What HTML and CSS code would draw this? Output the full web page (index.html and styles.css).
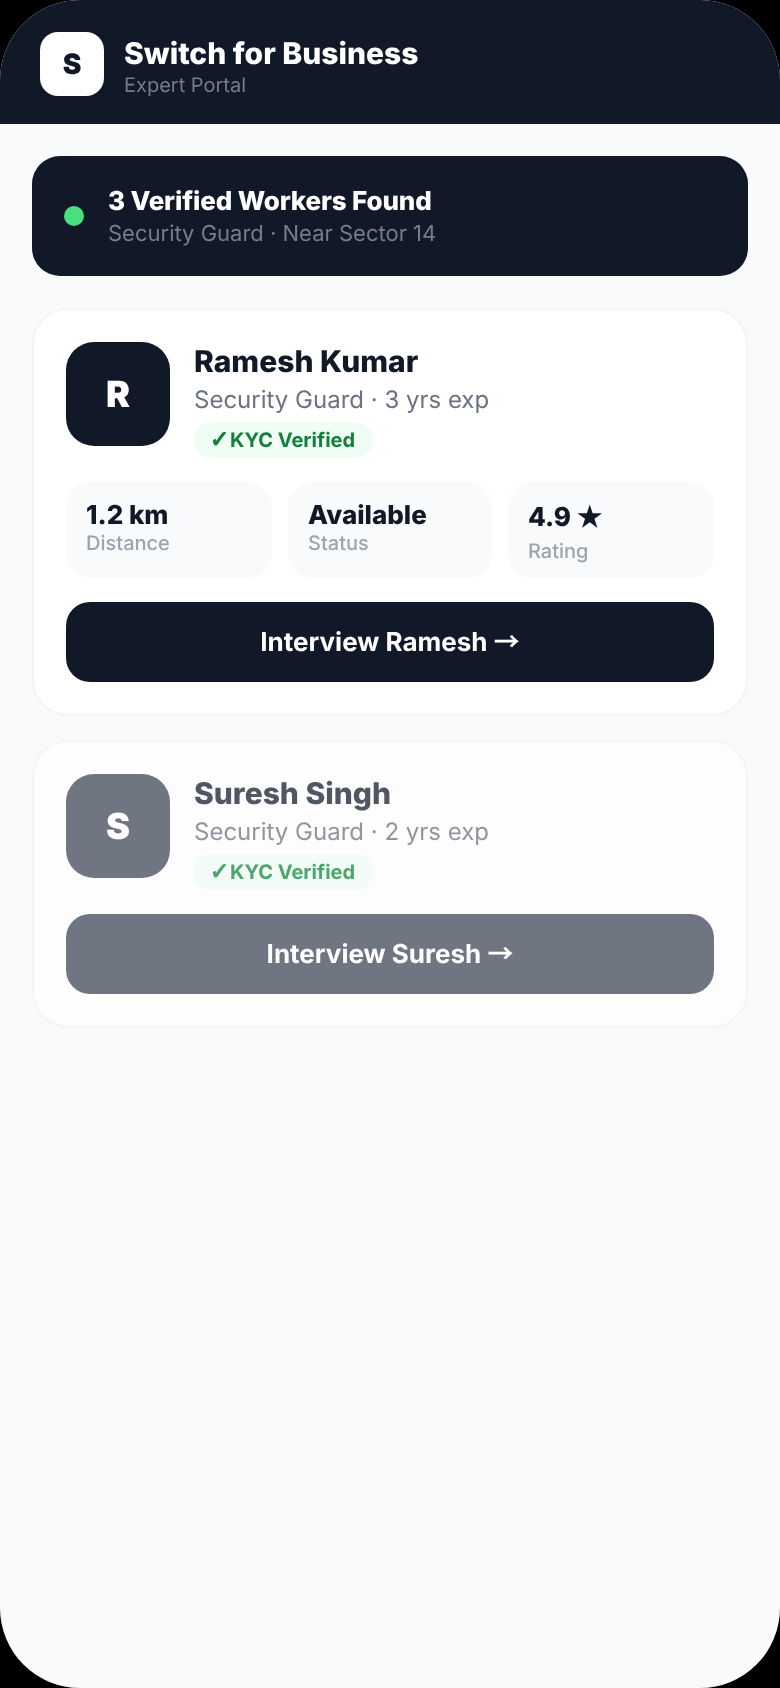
FILE: index.html
```html
<!DOCTYPE html>
<html lang="en">
<head>
<meta charset="utf-8">
<title>Switch for Business</title>
<link rel="stylesheet" href="styles.css">
</head>
<body>
<div class="app">
  <header class="header">
    <div class="logo">S</div>
    <div class="brand-text">
      <div class="brand">Switch for Business</div>
      <div class="portal">Expert Portal</div>
    </div>
  </header>
  <main class="content">
    <section class="banner">
      <span class="dot"></span>
      <div class="banner-text">
        <div class="banner-title">3 Verified Workers Found</div>
        <div class="banner-sub">Security Guard · Near Sector 14</div>
      </div>
    </section>
    <article class="card">
      <div class="person">
        <div class="avatar">R</div>
        <div class="info">
          <div class="name">Ramesh Kumar</div>
          <div class="role">Security Guard · 3 yrs exp</div>
          <span class="badge"><span class="check">✓</span>KYC Verified</span>
        </div>
      </div>
      <div class="stats">
        <div class="stat"><div class="value">1.2 km</div><div class="label">Distance</div></div>
        <div class="stat"><div class="value">Available</div><div class="label">Status</div></div>
        <div class="stat"><div class="value value-rated">4.9 <span class="glyph">★</span></div><div class="label">Rating</div></div>
      </div>
      <button class="cta">Interview Ramesh <span class="glyph">→</span></button>
    </article>
    <article class="card card-muted">
      <div class="person">
        <div class="avatar">S</div>
        <div class="info">
          <div class="name">Suresh Singh</div>
          <div class="role">Security Guard · 2 yrs exp</div>
          <span class="badge"><span class="check">✓</span>KYC Verified</span>
        </div>
      </div>
      <button class="cta">Interview Suresh <span class="glyph">→</span></button>
    </article>
  </main>
</div>
</body>
</html>
```
FILE: styles.css
```css
* { box-sizing: border-box; }
html, body { margin: 0; background: #000; }
body {
  font-family: Inter, "Liberation Sans", sans-serif;
  font-optical-sizing: none;
  text-rendering: geometricPrecision;
}
.glyph { font-family: "Noto Sans CJK JP", "DejaVu Sans", sans-serif; line-height: 1; }
.check {
  display: inline-block;
  width: 20px;
  font-family: "DejaVu Sans", sans-serif;
  font-size: 23px;
  line-height: 1;
  -webkit-text-stroke: 1.2px currentColor;
}
.app {
  width: 780px;
  height: 1688px;
  border-radius: 80px;
  overflow: hidden;
  background: #f9fafb;
  transform: translateZ(0);
}
.header {
  height: 124px;
  background: #111827;
  display: flex;
  align-items: flex-start;
  gap: 20px;
  padding: 32px 40px 0;
}
.logo {
  width: 64px;
  height: 64px;
  border-radius: 18px;
  background: #fff;
  color: #111827;
  font-size: 28px;
  font-weight: 900;
  display: flex;
  align-items: center;
  justify-content: center;
}
.brand-text { padding-top: 4px; }
.brand { color: #fff; font-size: 30px; font-weight: 850; line-height: 36px; }
.portal { color: #767c88; font-size: 20px; line-height: 26px; }
.content {
  padding: 32px;
  display: flex;
  flex-direction: column;
  gap: 24px;
}
.banner {
  height: 120px;
  margin-bottom: 8px;
  background: #111827;
  border-radius: 28px;
  display: flex;
  align-items: center;
  gap: 24px;
  padding: 0 32px;
}
.dot { width: 20px; height: 20px; border-radius: 50%; background: #4ade80; }
.banner-text { padding-top: 5px; }
.banner-title { color: #fff; font-size: 26px; font-weight: 800; line-height: 32px; letter-spacing: -0.15px; }
.banner-sub { color: #767c88; font-size: 22px; line-height: 33px; }
.card {
  background: #fff;
  border: 2px solid #f3f4f6;
  border-radius: 36px;
  padding: 32px;
  display: flex;
  flex-direction: column;
  gap: 24px;
}
.person { display: flex; gap: 24px; align-items: flex-start; }
.avatar {
  flex: none;
  width: 104px;
  height: 104px;
  border-radius: 28px;
  background: #111827;
  color: #fff;
  font-size: 36px;
  font-weight: 900;
  display: flex;
  align-items: center;
  justify-content: center;
}
.info { display: flex; flex-direction: column; align-items: flex-start; }
.name { color: #111827; font-size: 30px; font-weight: 850; line-height: 40px; }
.role { color: #6b7280; font-size: 24px; line-height: 36px; }
.badge {
  margin-top: 4px;
  background: #f0fdf4;
  color: #15803d;
  font-size: 20px;
  font-weight: 700;
  line-height: 36px;
  height: 36px;
  padding: 0 18px 0 16px;
  border-radius: 18px;
}
.stats { display: grid; grid-template-columns: 206px 204px 206px; gap: 16px; }
.stat {
  height: 96px;
  background: #f9fafb;
  border-radius: 24px;
  padding: 18px 20px 0;
}
.value { color: #111827; font-size: 26px; font-weight: 800; line-height: 31px; }
.value-rated { padding: 2px 0 6px; }
.label { color: #9ca3af; font-size: 20px; font-weight: 500; line-height: 24px; }
.cta {
  height: 80px;
  border: 0;
  border-radius: 24px;
  padding: 0;
  background: #111827;
  color: #fff;
  font: 700 26px Inter, "Liberation Sans", sans-serif;
  font-optical-sizing: none;
  text-rendering: geometricPrecision;
}
.cta .glyph { font-family: "Noto Sans CJK JP", "DejaVu Sans", sans-serif; }
.card-muted { background: #fdfdfe; }
.card-muted .avatar, .card-muted .cta { background: #707582; }
.card-muted .name { color: #505662; }
.card-muted .role { color: #9095a0; }
.card-muted .badge { background: #f2fbf5; color: #4ea56f; }
```
